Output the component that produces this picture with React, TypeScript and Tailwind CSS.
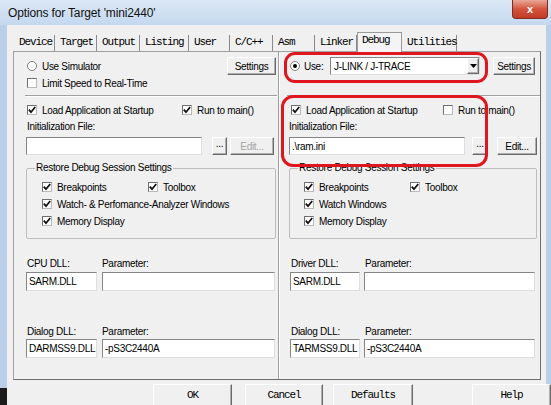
import React from "react";

const mono = "font-['Liberation_Mono','Courier_New',monospace] font-normal text-[11px] tracking-[-1.1px] text-black";

const tabs = [
  { label: "Device", w: "w-[41px]" },
  { label: "Target", w: "w-[42px]" },
  { label: "Output", w: "w-[43px]" },
  { label: "Listing", w: "w-[49px]" },
  { label: "User", w: "w-[41px]" },
  { label: "C/C++", w: "w-[43px]" },
  { label: "Asm", w: "w-[42px]" },
  { label: "Linker", w: "w-[42px]" },
  { label: "Debug", w: "w-[45px]", active: true },
  { label: "Utilities", w: "w-[55px]" }
];

function Check({ on = true }: { on?: boolean }) {
  return (
    <span className="w-[10px] h-[10px] shrink-0 bg-white border border-t-[#6f6f6f] border-l-[#6f6f6f] border-r-[#b9b9b9] border-b-[#b9b9b9] flex items-center justify-center">
      {on && (
        <svg width="8" height="8" viewBox="0 0 8 8">
          <path d="M0.8 3.6 L3 6.2 L7.2 1" fill="none" stroke="#111" strokeWidth="1.8" />
        </svg>
      )}
    </span>
  );
}

function Radio({ on = false }: { on?: boolean }) {
  return (
    <span className="w-[10px] h-[10px] shrink-0 rounded-full bg-white border border-[#7f7f7f] flex items-center justify-center">
      {on && <span className="w-[4px] h-[4px] rounded-full bg-black" />}
    </span>
  );
}

function Btn({ className, children, disabled }: { className: string; children: React.ReactNode; disabled?: boolean }) {
  return (
    <div
      className={`flex items-center justify-center shrink-0 bg-[#f0f0f0] border border-t-white border-l-white border-r-[#6a6a6a] border-b-[#6a6a6a] shadow-[inset_-1px_-1px_0_#b0b0b0] ${
        disabled ? "text-[#a4a4a4]" : "text-black"
      } ${className}`}
    >
      {children}
    </div>
  );
}

function Field({ className, children }: { className: string; children?: React.ReactNode }) {
  return (
    <div
      className={`shrink-0 bg-white border border-t-[#858585] border-l-[#858585] border-r-[#dedede] border-b-[#dedede] flex items-center pl-[2px] whitespace-nowrap overflow-hidden ${className}`}
    >
      {children}
    </div>
  );
}

function Row({ className = "", children }: { className?: string; children: React.ReactNode }) {
  return <div className={`h-[14px] flex items-center whitespace-nowrap ${className}`}>{children}</div>;
}

export default function App() {
  return (
    <div className="relative w-[551px] h-[405px] overflow-hidden bg-[#bad0e9] font-['Liberation_Sans',Arial,sans-serif] text-[10px] tracking-[-0.3px] text-black">
      {/* title bar */}
      <div className="h-[25px] flex items-start justify-between bg-gradient-to-b from-[#dce8f5] to-[#c4d8ee]">
        <span className="pl-[8px] pt-[5px] text-[12px] tracking-[-0.15px] leading-[16px] text-[#111]">
          Options for Target 'mini2440'
        </span>
        <div className="mr-[3px] w-[36px] h-[19px] rounded-b-[4px] border border-t-0 border-[#83291f] bg-gradient-to-b from-[#e9a898] via-[#d2543d] to-[#c23b25] flex items-center justify-center text-white font-bold text-[11px] tracking-normal">
          x
        </div>
      </div>

      {/* dialog body */}
      <div className="ml-[7px] mr-[5px] h-[380px] bg-[#f0f0f0] pt-[8px]">
        {/* tabs */}
        <div className={`h-[18px] pl-[7px] flex items-end ${mono}`}>
          {tabs.map((t) =>
            t.active ? (
              <div
                key={t.label}
                className={`${t.w} h-[20px] -mb-[1px] relative z-10 bg-[#f4f4f4] border border-b-0 border-[#9a9a9a] pl-[4px] pb-[4px] flex items-center`}
              >
                {t.label}
              </div>
            ) : (
              <div key={t.label} className={`${t.w} h-[16px] border-r border-[#8a8a8a] pl-[5px] pb-[2px] flex items-center`}>
                {t.label}
              </div>
            )
          )}
        </div>

        {/* tab page */}
        <div className="ml-[6px] w-[528px] h-[329px] border border-[#a0a0a0] border-r-[#6d6d6d] border-b-[#6d6d6d] flex">
          {/* left half */}
          <div className="w-[264px] pl-[13px] pr-[2px]">
            <div className="mt-[5px] h-[18px] flex items-center">
              <Radio />
              <span className="ml-[5px]">Use Simulator</span>
              <Btn className="ml-auto w-[49px] h-[18px]">Settings</Btn>
            </div>
            <Row className="mt-[1px]">
              <Check on={false} />
              <span className="ml-[5px]">Limit Speed to Real-Time</span>
            </Row>
            <div className="mt-[5px] -ml-[2px] -mr-[1px] h-[2px] border-t border-[#a0a0a0] border-b border-b-white" />
            <Row className="mt-[6px]">
              <div className="w-[155px] flex items-center">
                <Check />
                <span className="ml-[5px]">Load Application at Startup</span>
              </div>
              <Check />
              <span className="ml-[5px]">Run to main()</span>
            </Row>
            <Row className="mt-[2px]">Initialization File:</Row>
            <div className="mt-[4px] flex">
              <Field className="-ml-[1px] w-[176px] h-[18px]" />
              <Btn className="ml-[10px] w-[15px] h-[18px] items-end pb-[3px]">...</Btn>
              <Btn className="ml-[3px] w-[44px] h-[18px]" disabled>
                Edit...
              </Btn>
            </div>
            <div className="mt-[13px] -ml-[1px] w-[250px] h-[71px] relative border border-[#bdbdbd] rounded-[2px] pt-[11px] pl-[15px]">
              <span className="absolute left-[8px] -top-[8px] bg-[#f0f0f0] px-[1px] leading-[14px]">
                Restore Debug Session Settings
              </span>
              <Row>
                <div className="w-[106px] flex items-center">
                  <Check />
                  <span className="ml-[5px]">Breakpoints</span>
                </div>
                <Check />
                <span className="ml-[5px]">Toolbox</span>
              </Row>
              <Row className="mt-[3px]">
                <Check />
                <span className="ml-[5px]">Watch- &amp; Perfomance-Analyzer Windows</span>
              </Row>
              <Row className="mt-[3px]">
                <Check />
                <span className="ml-[5px]">Memory Display</span>
              </Row>
            </div>
            <Row className="mt-[17px]">
              <span className="w-[75px]">CPU DLL:</span>
              <span>Parameter:</span>
            </Row>
            <div className="mt-[2px] flex">
              <Field className="-ml-[1px] w-[71px] h-[19px]">SARM.DLL</Field>
              <Field className="ml-[5px] w-[173px] h-[19px]" />
            </div>
            <Row className="mt-[33px]">
              <span className="w-[75px]">Dialog DLL:</span>
              <span>Parameter:</span>
            </Row>
            <div className="mt-[1px] flex">
              <Field className="-ml-[1px] w-[71px] h-[19px]">DARMSS9.DLL</Field>
              <Field className="ml-[5px] w-[173px] h-[19px]">-pS3C2440A</Field>
            </div>
          </div>

          {/* divider */}
          <div className="w-[2px] border-l border-[#a0a0a0] border-r border-r-white" />

          {/* right half */}
          <div className="flex-1 pl-[10px]">
            <div className="mt-[5px] h-[18px] flex items-center">
              <Radio on />
              <span className="ml-[4px] w-[26px]">Use:</span>
              <Field className="w-[150px] h-[18px] justify-between pr-0">
                <span className="pl-[1px]">J-LINK / J-TRACE</span>
                <Btn className="w-[12px] h-[16px]">
                  <svg width="7" height="4" viewBox="0 0 7 4">
                    <path d="M0 0 H7 L3.5 4 Z" fill="#000" />
                  </svg>
                </Btn>
              </Field>
              <Btn className="ml-[13px] w-[42px] h-[18px]">Settings</Btn>
            </div>
            <div className="mt-[20px] -ml-[3px] h-[2px] border-t border-[#a0a0a0] border-b border-b-white" />
            <Row className="mt-[6px] pl-[1px]">
              <div className="w-[152px] flex items-center">
                <Check />
                <span className="ml-[5px]">Load Application at Startup</span>
              </div>
              <Check on={false} />
              <span className="ml-[5px]">Run to main()</span>
            </Row>
            <Row className="mt-[2px] -ml-[1px]">Initialization File:</Row>
            <div className="mt-[4px] flex">
              <Field className="-ml-[1px] w-[176px] h-[18px]">.\ram.ini</Field>
              <Btn className="ml-[7px] w-[16px] h-[18px] items-end pb-[3px]">...</Btn>
              <Btn className="ml-[9px] w-[40px] h-[18px]">Edit...</Btn>
            </div>
            <div className="mt-[13px] -ml-[1px] w-[248px] h-[71px] relative border border-[#bdbdbd] rounded-[2px] pt-[11px] pl-[14px]">
              <span className="absolute left-[8px] -top-[8px] bg-[#f0f0f0] px-[1px] leading-[14px]">
                Restore Debug Session Settings
              </span>
              <Row>
                <div className="w-[106px] flex items-center">
                  <Check />
                  <span className="ml-[5px]">Breakpoints</span>
                </div>
                <Check />
                <span className="ml-[5px]">Toolbox</span>
              </Row>
              <Row className="mt-[3px]">
                <Check />
                <span className="ml-[5px]">Watch Windows</span>
              </Row>
              <Row className="mt-[3px]">
                <Check />
                <span className="ml-[5px]">Memory Display</span>
              </Row>
            </div>
            <Row className="mt-[17px] pl-[1px]">
              <span className="w-[74px]">Driver DLL:</span>
              <span>Parameter:</span>
            </Row>
            <div className="mt-[2px] flex">
              <Field className="w-[70px] h-[19px]">SARM.DLL</Field>
              <Field className="ml-[4px] w-[171px] h-[19px]" />
            </div>
            <Row className="mt-[33px] pl-[1px]">
              <span className="w-[74px]">Dialog DLL:</span>
              <span>Parameter:</span>
            </Row>
            <div className="mt-[1px] flex">
              <Field className="w-[70px] h-[19px]">TARMSS9.DLL</Field>
              <Field className="ml-[4px] w-[171px] h-[19px]">-pS3C2440A</Field>
            </div>
          </div>
        </div>

        {/* dialog buttons */}
        <div className={`mt-[4px] flex ${mono}`}>
          <Btn className="ml-[146px] w-[79px] h-[23px]">OK</Btn>
          <Btn className="ml-[13px] w-[78px] h-[23px]">Cancel</Btn>
          <Btn className="ml-[10px] w-[80px] h-[23px]">Defaults</Btn>
          <Btn className="ml-[59px] w-[79px] h-[23px]">Help</Btn>
        </div>
      </div>

      {/* desktop behind the frame */}
      <div className="absolute left-0 top-[388px] w-[7px] h-[17px] bg-[#1b1b1b]" />

      {/* red highlight marks */}
      <div className="absolute left-[284px] top-[52px] w-[204px] h-[31px] border-[3px] border-[#e0161e] rounded-[11px]" />
      <div className="absolute left-[281px] top-[95px] w-[207px] h-[72px] border-[3px] border-[#e0161e] rounded-[12px]" />
    </div>
  );
}
